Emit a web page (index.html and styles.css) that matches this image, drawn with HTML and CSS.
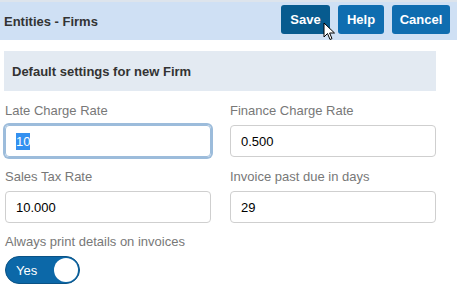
FILE: index.html
```html
<!DOCTYPE html>
<html lang="en">
<head>
  <meta charset="UTF-8" />
  <title>Entities - Firms</title>
  <link rel="stylesheet" href="styles.css">
</head>
<body>
  <div class="topbar">
    <h1>Entities - Firms</h1>
    <div class="actions">
      <button class="btn btn-save">Save</button>
      <button class="btn btn-help">Help</button>
      <button class="btn btn-cancel">Cancel</button>
    </div>
    <svg class="cursor" width="13" height="20" viewBox="0 0 13 20">
      <path d="M1 1 L1 15 L4.5 11.5 L7 17.5 L9 16.6 L6.6 11 L11.5 11 Z" fill="#fff" stroke="#000" stroke-width="1" stroke-linejoin="round" />
    </svg>
  </div>

  <div class="content">
    <div class="section-title">Default settings for new Firm</div>

    <div class="grid">
      <div class="field">
        <label>Late Charge Rate</label>
        <div class="input focused"><span class="selected">10</span></div>
      </div>
      <div class="field">
        <label>Finance Charge Rate</label>
        <div class="input">0.500</div>
      </div>
      <div class="field">
        <label>Sales Tax Rate</label>
        <div class="input">10.000</div>
      </div>
      <div class="field">
        <label>Invoice past due in days</label>
        <div class="input">29</div>
      </div>
    </div>

    <div class="field">
      <label>Always print details on invoices</label>
      <div class="toggle">
        <span class="toggle-text">Yes</span>
        <span class="knob"></span>
      </div>
    </div>
  </div>
</body>
</html>
```

FILE: styles.css
```css
* {
  box-sizing: border-box;
}
body {
  margin: 0;
  font-family: "Liberation Sans", Arial, sans-serif;
  font-size: 13px;
  color: #333;
  background: #fff;
}
.topbar {
  position: relative;
  height: 40px;
  border-top: 2px solid #dde4ec;
  background: #cfe0f4;
  display: flex;
  align-items: center;
  justify-content: space-between;
  padding: 0 7px 0 4px;
}
h1 {
  margin: 0;
  font-size: 13px;
  font-weight: bold;
  color: #333;
  padding-top: 1px;
}
.actions {
  display: flex;
  gap: 8px;
  margin-bottom: 4px;
}
.btn {
  height: 29px;
  padding: 0;
  border: none;
  border-radius: 3px;
  background: #0f6db0;
  color: #fff;
  font-family: "Liberation Sans", Arial, sans-serif;
  font-size: 13px;
  font-weight: bold;
}
.btn-save {
  background: #075b8f;
  width: 49px;
}
.btn-help {
  width: 46px;
}
.btn-cancel {
  width: 58px;
}
.cursor {
  position: absolute;
  left: 323px;
  top: 20px;
}
.content {
  padding: 11px 21px 0 4px;
}
.section-title {
  height: 40px;
  background: #e3eaf2;
  font-weight: bold;
  padding-left: 8px;
  display: flex;
  align-items: center;
}
.grid {
  display: grid;
  grid-template-columns: 207px 207px;
  column-gap: 18px;
  padding-left: 1px;
}
.field {
  margin-top: 12px;
}
.content > .field {
  margin-top: 11px;
  padding-left: 1px;
}
label {
  display: block;
  line-height: 15px;
  color: #787878;
  margin-bottom: 7px;
}
.input {
  height: 32px;
  border: 1px solid #cfcfcf;
  border-radius: 4px;
  padding: 0 10px;
  display: flex;
  align-items: center;
  color: #000;
  width: 206px;
}
.input.focused {
  border-color: #9cbcdb;
  box-shadow: 0 0 0 2px #9cbcdb;
}
.selected {
  background: #3390f0;
  color: #fff;
  line-height: 17px;
}
.toggle {
  width: 75px;
  height: 28px;
  border-radius: 14px;
  background: #0c68a8;
  border: 1px solid #0a5285;
  display: flex;
  align-items: center;
  justify-content: space-between;
  padding: 0 1px 0 10px;
}
.toggle-text {
  color: #fff;
}
.knob {
  width: 24px;
  height: 24px;
  border-radius: 50%;
  background: #fff;
}
```
